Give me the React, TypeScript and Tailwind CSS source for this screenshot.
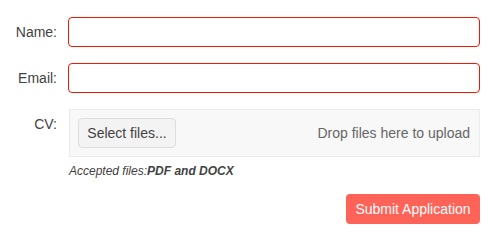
import React from 'react';

const App: React.FC = () => {
  return (
    <div className="w-[497px] h-[242px] bg-white font-['Liberation_Sans',Arial,sans-serif] text-[14px] text-[#424242]">
      <form className="grid grid-cols-[57px_412px] gap-x-[11px] gap-y-[16px] pt-[17px]">
        {/* Name */}
        <label className="text-right leading-[30px] h-[30px]">Name:</label>
        <input className="h-[30px] rounded-[4px] border border-[#f31700] outline-none px-2" />

        {/* Email */}
        <label className="text-right leading-[30px] h-[30px]">Email:</label>
        <input className="h-[30px] rounded-[4px] border border-[#f31700] outline-none px-2" />

        {/* CV */}
        <label className="text-right leading-[30px] h-[30px]">CV:</label>
        <div className="flex flex-col">
          <div className="ml-[1px] h-[48px] flex items-center justify-between border border-[#ebebeb] bg-[#f8f8f8] pl-[8px] pr-[9px]">
            <button
              type="button"
              className="h-[30px] w-[98px] rounded-[4px] border border-[#dedede] bg-[#f3f3f3] text-[#424242]"
            >
              Select files...
            </button>
            <span className="text-[#666666]">Drop files here to upload</span>
          </div>
          <p className="ml-[1px] mt-[6px] text-[12px] italic leading-[16px]">
            Accepted files:<strong className="font-bold">PDF and DOCX</strong>
          </p>
          <div className="flex justify-end mt-[15px]">
            <button
              type="button"
              className="h-[30px] w-[134px] rounded-[4px] bg-[#ff6358] text-white"
            >
              Submit Application
            </button>
          </div>
        </div>
      </form>
    </div>
  );
};

export default App;
